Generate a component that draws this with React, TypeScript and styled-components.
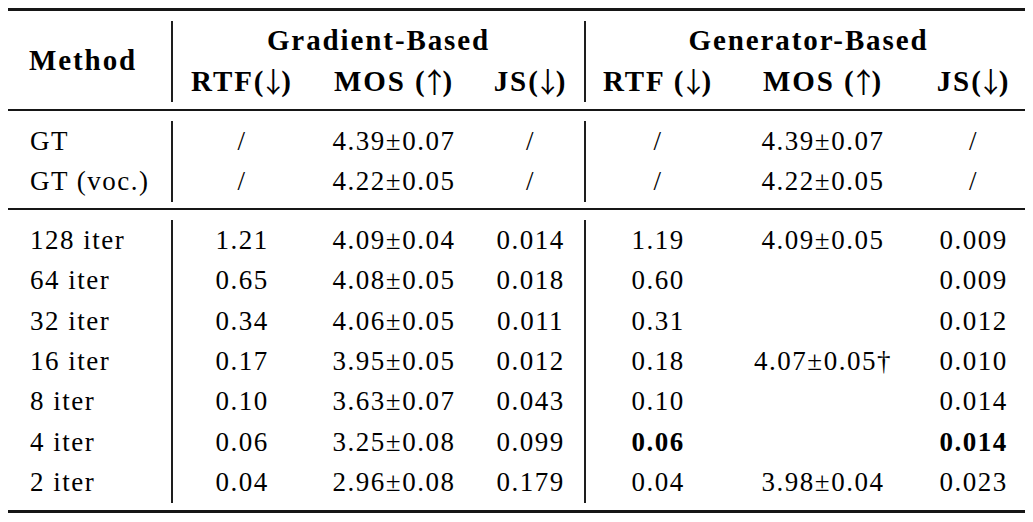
import React from "react";
import styled, { createGlobalStyle } from "styled-components";

const GlobalStyle = createGlobalStyle`
	body {
		margin: 8px;
		background: #fff;
		color: #000;
		font-family: "Liberation Serif", "Times New Roman", serif;
	}
`;

type Row = string[];

const refRows: Row[] = [
	["GT", "/", "4.39±0.07", "/", "/", "4.39±0.07", "/"],
	["GT (voc.)", "/", "4.22±0.05", "/", "/", "4.22±0.05", "/"],
];

const iterRows: Row[] = [
	["128 iter", "1.21", "4.09±0.04", "0.014", "1.19", "4.09±0.05", "0.009"],
	["64 iter", "0.65", "4.08±0.05", "0.018", "0.60", "", "0.009"],
	["32 iter", "0.34", "4.06±0.05", "0.011", "0.31", "", "0.012"],
	["16 iter", "0.17", "3.95±0.05", "0.012", "0.18", "4.07±0.05†", "0.010"],
	["8 iter", "0.10", "3.63±0.07", "0.043", "0.10", "", "0.014"],
	["4 iter", "0.06", "3.25±0.08", "0.099", "0.06", "", "0.014"],
	["2 iter", "0.04", "2.96±0.08", "0.179", "0.04", "3.98±0.04", "0.023"],
];

const best: Record<string, number[]> = {
	"4 iter": [4, 6],
};

const widths = [163, 140, 166, 107, 146, 186, 115];
const sepCols = [1, 4];

// header label with a thin arrow, e.g. "RTF(↓)" or "MOS (↑)"
const Metric: React.FC<{ name: string; dir: "up" | "down"; spaced?: boolean }> = ({
	name,
	dir,
	spaced,
}) => (
	<>
		{name}
		{spaced ? " " : ""}(<Arrow>{dir === "up" ? "↑" : "↓"}</Arrow>)
	</>
);

const App: React.FC = () => {
	const renderRows = (rows: Row[], h: number) =>
		rows.map((r) => (
			<tr key={r[0]}>
				{r.map((c, i) => (
					<Td
						key={i}
						$h={h}
						$sep={sepCols.includes(i)}
						$left={i === 0}
						$bold={(best[r[0]] || []).includes(i)}
					>
						{c}
					</Td>
				))}
			</tr>
		));

	return (
		<>
			<GlobalStyle />
			<Table>
				<colgroup>
					{widths.map((w, i) => (
						<col key={i} style={{ width: w }} />
					))}
				</colgroup>
				<thead>
					<Rule $w={3} />
					<Gap $h={10} />
					<tr>
						<Th rowSpan={2} $left $h={39}>
							<MethodLabel>Method</MethodLabel>
						</Th>
						<Th colSpan={3} $sep $h={39}>
							Gradient-Based
						</Th>
						<Th colSpan={3} $sep $h={39}>
							Generator-Based
						</Th>
					</tr>
					<tr>
						<Th $sep $h={42}>
							<Metric name="RTF" dir="down" />
						</Th>
						<Th $h={42}>
							<Metric name="MOS" dir="up" spaced />
						</Th>
						<Th $h={42}>
							<Metric name="JS" dir="down" />
						</Th>
						<Th $sep $h={42}>
							<Metric name="RTF" dir="down" spaced />
						</Th>
						<Th $h={42}>
							<Metric name="MOS" dir="up" spaced />
						</Th>
						<Th $h={42}>
							<Metric name="JS" dir="down" />
						</Th>
					</tr>
					<Gap $h={7} />
					<Rule $w={2} />
				</thead>
				<tbody>
					<Gap $h={10} />
					{renderRows(refRows, 40.5)}
					<Gap $h={6} />
					<Rule $w={2} />
					<Gap $h={10} />
				</tbody>
				<tbody>
					{renderRows(iterRows, 40.43)}
					<Gap $h={7} />
					<Rule $w={3} />
				</tbody>
			</Table>
		</>
	);
};

export default App;

/* ================= styled ================ */

const Table = styled.table`
	width: 1023px;
	table-layout: fixed;
	border-collapse: separate;
	border-spacing: 0;
`;

const RuleRow = styled.tr<{ $w: number }>`
	td {
		height: ${({ $w }) => $w}px;
		padding: 0;
		background: #161616;
	}
`;

const Rule: React.FC<{ $w: number }> = ({ $w }) => (
	<RuleRow $w={$w}>
		<td colSpan={7} />
	</RuleRow>
);

const GapRow = styled.tr<{ $h: number }>`
	td {
		height: ${({ $h }) => $h}px;
		padding: 0;
	}
`;

const Gap: React.FC<{ $h: number }> = ({ $h }) => (
	<GapRow $h={$h}>
		<td colSpan={7} />
	</GapRow>
);

const Th = styled.th<{ $sep?: boolean; $left?: boolean; $h: number }>`
	height: ${({ $h }) => $h}px;
	padding: 0 0 0 ${({ $left }) => ($left ? "21px" : "0")};
	text-align: ${({ $left }) => ($left ? "left" : "center")};
	vertical-align: middle;
	font-size: 29px;
	font-weight: 700;
	letter-spacing: 1.9px;
	line-height: 1;
	white-space: nowrap;
	border-left: ${({ $sep }) => ($sep ? "2px solid #1e1e1e" : "none")};
`;

const Arrow = styled.span`
	font-family: "Noto Sans CJK JP", "DejaVu Sans", sans-serif;
	font-weight: 400;
	font-size: 28px;
	line-height: 1;
	color: #000;
	letter-spacing: 0;
	margin: 0 -6px;
	vertical-align: -2px;
`;

const MethodLabel = styled.span`
	display: inline-block;
	padding-bottom: 3px;
`;

const Td = styled.td<{
	$sep?: boolean;
	$left?: boolean;
	$bold?: boolean;
	$h: number;
}>`
	height: ${({ $h }) => $h}px;
	padding: 0 0 0 ${({ $left }) => ($left ? "22px" : "0")};
	text-align: ${({ $left }) => ($left ? "left" : "center")};
	vertical-align: middle;
	font-size: 27px;
	font-weight: ${({ $bold }) => ($bold ? 700 : 400)};
	letter-spacing: 1.5px;
	line-height: 1;
	white-space: nowrap;
	border-left: ${({ $sep }) => ($sep ? "2px solid #1e1e1e" : "none")};
`;
